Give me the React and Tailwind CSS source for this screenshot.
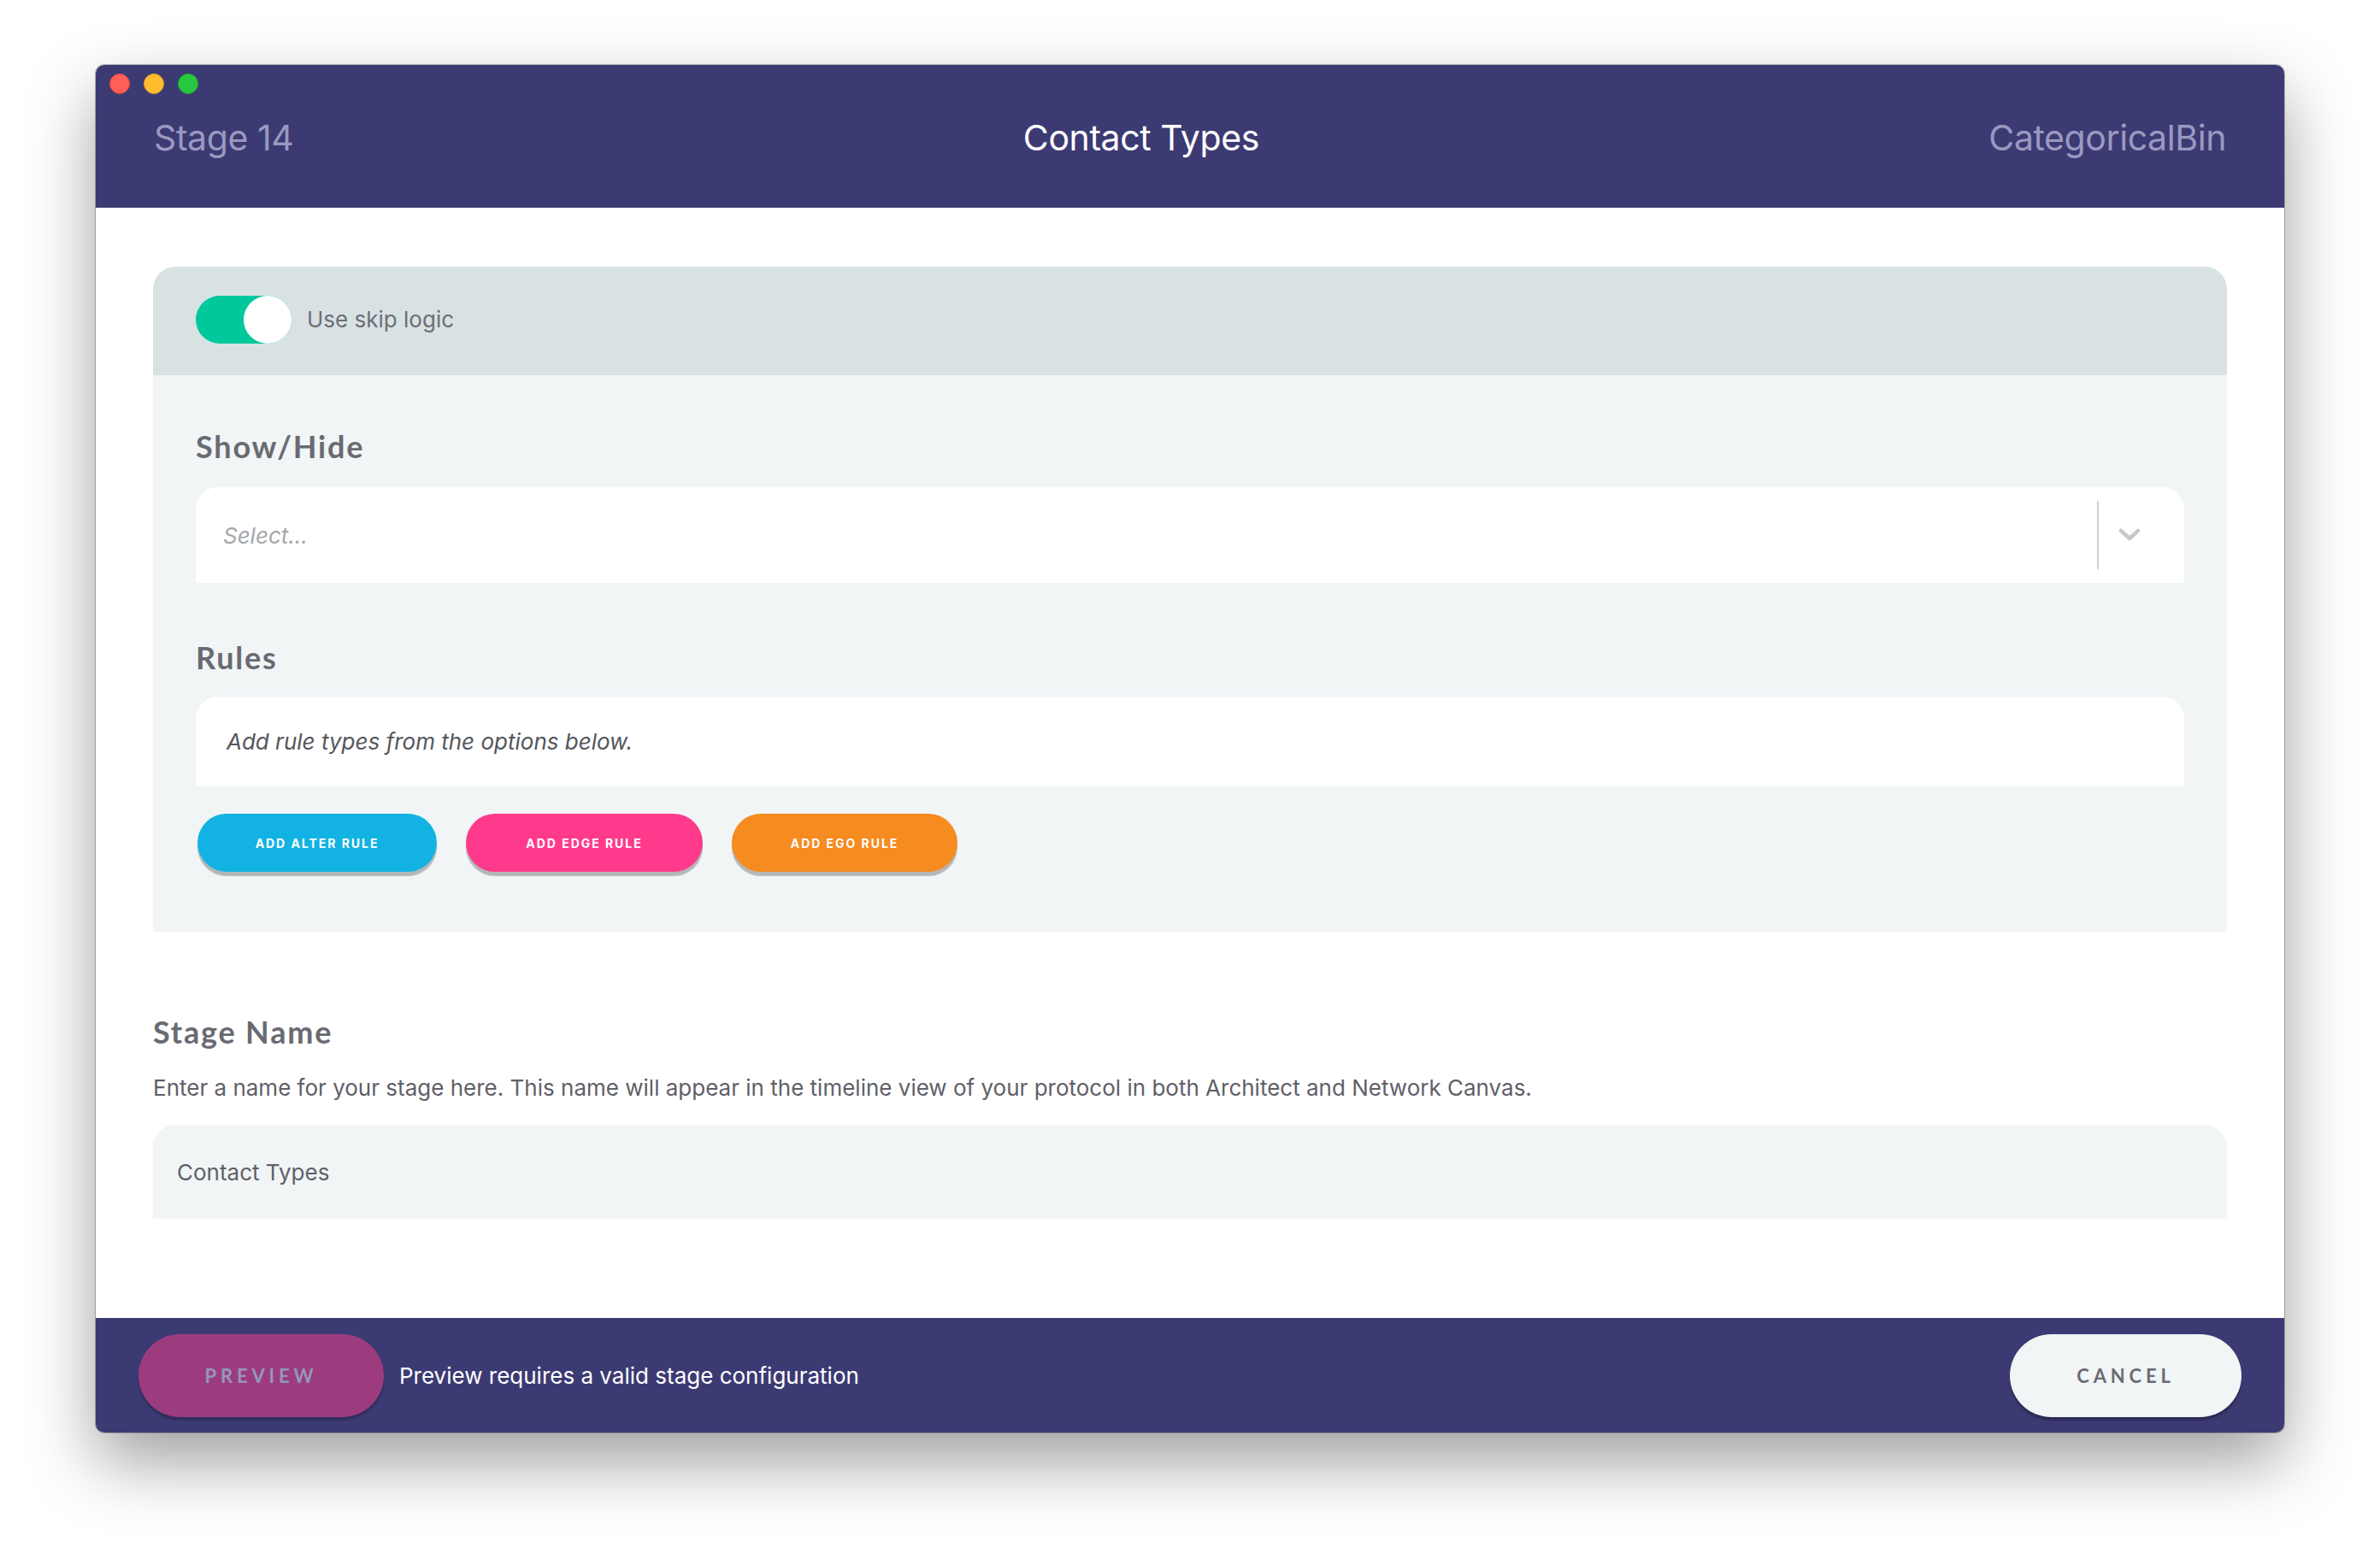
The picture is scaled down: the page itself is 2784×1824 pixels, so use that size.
import React, { useState } from 'react';

const sans = { fontFamily: 'Inter, "Liberation Sans", sans-serif' };
const round = { fontFamily: 'Lato, "Open Sans", sans-serif' };

function TrafficLights() {
    return (
        <div className="flex items-center gap-[16px] pl-[16px] pt-[10px] h-[34px]">
            <span className="w-[24px] h-[24px] rounded-full bg-[#fe5f57] border border-[#e2463f]" />
            <span className="w-[24px] h-[24px] rounded-full bg-[#febc2e] border border-[#e0a028]" />
            <span className="w-[24px] h-[24px] rounded-full bg-[#28c840] border border-[#1fac31]" />
        </div>
    );
}

function Toggle({ on, onChange }) {
    return (
        <button
            onClick={() => onChange(!on)}
            className={`relative w-[112px] h-[56px] rounded-full flex items-center ${on ? 'bg-[#00c89d] justify-end' : 'bg-[#b9c2c4] justify-start'}`}
        >
            <span className="w-[56px] h-[56px] rounded-full bg-white" />
        </button>
    );
}

function Heading({ children, className = '' }) {
    return (
        <h2 style={round} className={`text-[36px] leading-[44px] font-bold tracking-[0.05em] text-[#696a72] ${className}`}>
            {children}
        </h2>
    );
}

function RuleButton({ label, color, width }) {
    return (
        <button
            style={sans}
            className={`${color} ${width} h-[68px] rounded-full text-white text-[14px] font-bold tracking-[0.14em] shadow-[0_5px_1px_rgba(0,0,0,0.25)]`}
        >
            {label}
        </button>
    );
}

export default function App() {
    const [skipLogic, setSkipLogic] = useState(true);
    const [stageName, setStageName] = useState('Contact Types');

    return (
        <div className="w-[2784px] h-[1824px] bg-white pt-[76px] pl-[112px]" style={sans}>
            <div className="w-[2560px] h-[1600px] flex flex-col rounded-[10px] overflow-hidden bg-white ring-1 ring-black/25 shadow-[0_34px_80px_rgba(0,0,0,0.38)]">
                {/* title bar */}
                <header className="h-[167px] bg-[#3c3a73] flex flex-col">
                    <TrafficLights />
                    <div className="h-[103px] px-[68px] flex items-center justify-between text-[41px] tracking-[-0.01em] leading-none">
                        <span className="text-[#9a99c0]">Stage 14</span>
                        <span className="text-white">Contact Types</span>
                        <span className="text-[#9a99c0]">CategoricalBin</span>
                    </div>
                </header>

                {/* body */}
                <main className="flex-1 px-[67px] pt-[69px]">
                    <section className="rounded-t-[26px] overflow-hidden">
                        <div className="h-[127px] bg-[#d9e2e3] flex items-center gap-[18px] pl-[50px] pb-[4px]">
                            <Toggle on={skipLogic} onChange={setSkipLogic} />
                            <span className="text-[26px] text-[#6d6e76]">Use skip logic</span>
                        </div>
                        <div className="bg-[#f1f5f6] px-[50px] pt-[61px] pb-[70px]">
                            <Heading className="mb-[26px]">Show/Hide</Heading>
                            <div className="h-[112px] bg-white rounded-t-[26px] flex items-center pl-[32px]">
                                <span className="flex-1 italic text-[26px] text-[#a5a6ab]">Select...</span>
                                <span className="w-[2px] h-[80px] bg-[#cfcfcf]" />
                                <span className="w-[100px] flex justify-start pl-[23px]">
                                    <svg width="26" height="16" viewBox="0 0 26 16" fill="none">
                                        <path d="M3 3l10 9 10-9" stroke="#c8c8c8" strokeWidth="4.5" strokeLinecap="round" strokeLinejoin="round" />
                                    </svg>
                                </span>
                            </div>

                            <Heading className="mt-[65px] mb-[24px]">Rules</Heading>
                            <div className="h-[105px] bg-white rounded-t-[26px] flex items-center pl-[36px]">
                                <span className="italic text-[26px] text-[#55565d]">Add rule types from the options below.</span>
                            </div>
                            <div className="flex gap-[34px] mt-[32px] pl-[2px]">
                                <RuleButton label="ADD ALTER RULE" color="bg-[#12b3e2]" width="w-[280px]" />
                                <RuleButton label="ADD EDGE RULE" color="bg-[#ff3a8c]" width="w-[277px]" />
                                <RuleButton label="ADD EGO RULE" color="bg-[#f68b1f]" width="w-[264px]" />
                            </div>
                        </div>
                    </section>

                    <section className="pt-[95px]">
                        <Heading>Stage Name</Heading>
                        <p className="mt-[24px] text-[26px] leading-[40px] text-[#5f6068]">
                            Enter a name for your stage here. This name will appear in the timeline view of your protocol in both Architect and Network Canvas.
                        </p>
                        <div className="mt-[23px] h-[110px] bg-[#f1f5f6] rounded-t-[26px] flex items-center">
                            <input
                                value={stageName}
                                onChange={(e) => setStageName(e.target.value)}
                                className="w-full h-full bg-transparent pl-[28px] text-[26px] text-[#5f6068] outline-none"
                            />
                        </div>
                    </section>
                </main>

                {/* footer */}
                <footer className="h-[134px] bg-[#3c3a73] flex items-center justify-between px-[50px]">
                    <div className="flex items-center gap-[18px]">
                        <button
                            style={round}
                            className="w-[287px] h-[97px] rounded-full bg-[#9c3c7f] text-[#9497b8] text-[22px] font-bold tracking-[0.22em] shadow-[0_4px_2px_rgba(0,0,0,0.2)]"
                        >
                            PREVIEW
                        </button>
                        <span className="text-white text-[26px]">Preview requires a valid stage configuration</span>
                    </div>
                    <button
                        style={round}
                        className="w-[271px] h-[97px] rounded-full bg-[#f1f5f6] text-[#6a6b72] text-[22px] font-bold tracking-[0.22em] shadow-[0_4px_2px_rgba(0,0,0,0.25)]"
                    >
                        CANCEL
                    </button>
                </footer>
            </div>
        </div>
    );
}
